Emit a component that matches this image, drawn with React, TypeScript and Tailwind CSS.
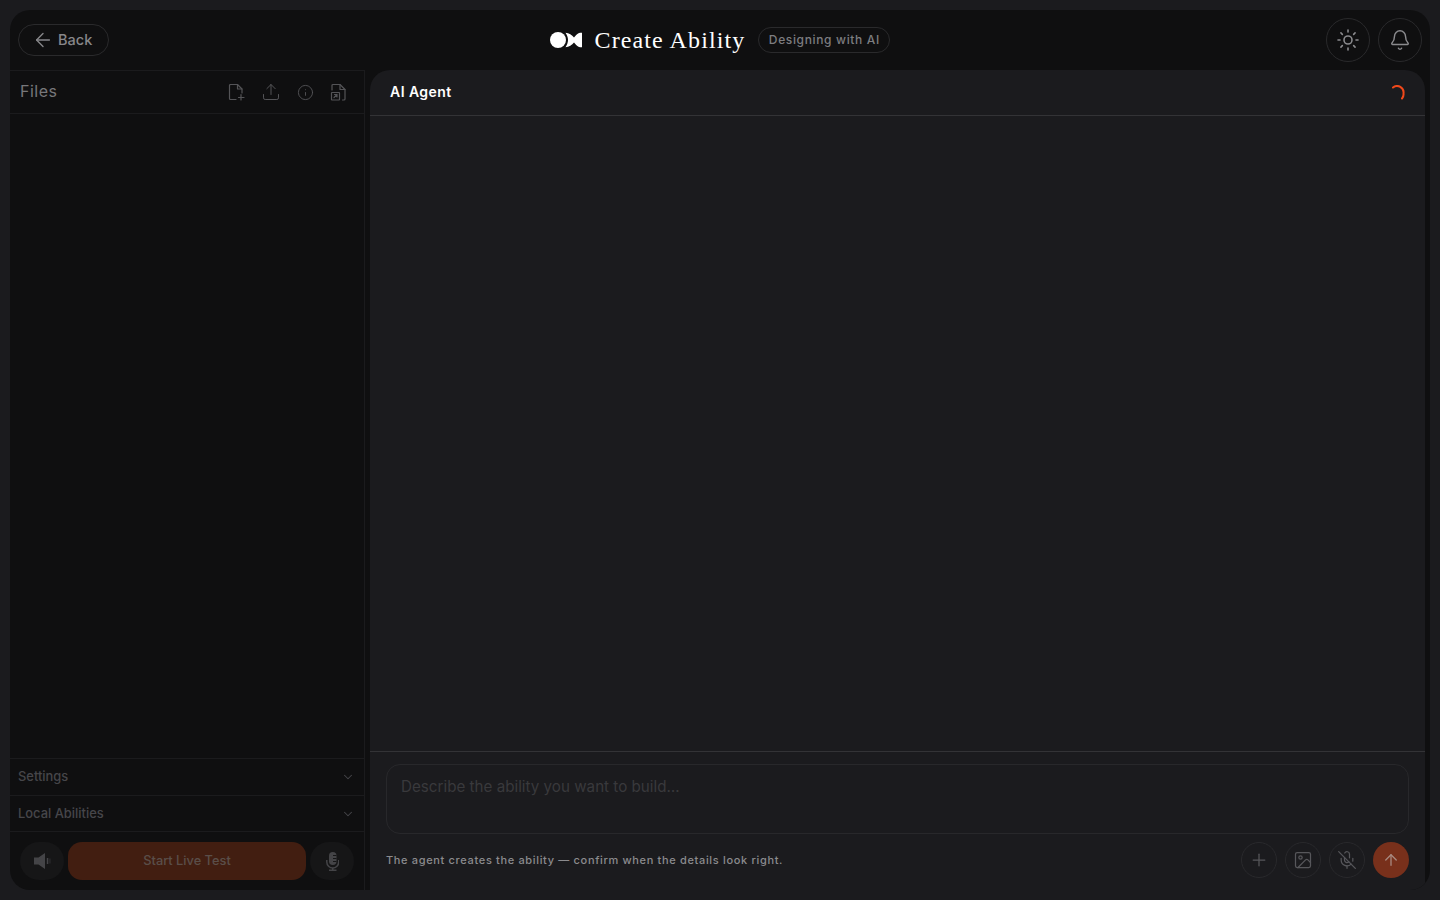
import React from "react";
import { ArrowLeft, Bell, ChevronDown, ImageIcon, Info, MicOff, Plus, Sun, Upload, ArrowUp } from "lucide-react";

const Logo = () => (
  <svg width="32" height="16" viewBox="0 0 32 16" fill="white">
    <circle cx="8" cy="8" r="8" />
    <path d="M15.500 .8C19 .8 22 3 24 5.500 26 3 28 .8 30 .8H32V15.200H30C28 15.200 26 13 24 10.500 22 13 19 15.200 15.500 15.200 17 13 18 10.500 18 8S17 3 15.500 .8z" />
  </svg>
);

const FileAdd = () => (
  <svg width="18" height="18" viewBox="0 0 18 18" fill="none" stroke="currentColor" strokeWidth="1.2" strokeLinecap="round" strokeLinejoin="round">
    <path d="M8 16.500H2.500a1 1 0 0 1-1-1v-13a1 1 0 0 1 1-1h7l4.500 4.500v4" />
    <path d="M9.500 1.500v4.500H14" />
    <path d="M13 11.500v5.500M10.500 14.500H16" />
  </svg>
);

const FileLink = () => (
  <svg width="18" height="18" viewBox="0 0 18 18" fill="none" stroke="currentColor" strokeWidth="1.2" strokeLinecap="round" strokeLinejoin="round">
    <path d="M2 7V2.500a1 1 0 0 1 1-1h7l5 5v9.500a1 1 0 0 1-1 1h-1.500" />
    <path d="M10 1.500v5h5" />
    <rect x="1.500" y="9.500" width="8" height="7.500" rx="0.5" />
    <path d="M4 14.500l3-3M4.500 11.500H7V14" />
  </svg>
);

const Speaker = () => (
  <svg width="17" height="16" viewBox="0 0 17 16" fill="currentColor">
    <path d="M0 4.500H4.500L11 0V16L4.500 11.500H0z" />
    <rect x="12.800" y="5" width="1.500" height="6" />
    <rect x="15.300" y="5.500" width="1.200" height="5" opacity="0.5" />
  </svg>
);

const MicFilled = () => (
  <svg width="13" height="19" viewBox="0 0 13 19" fill="none" stroke="currentColor">
    <rect x="3" y="0" width="7.500" height="13" rx="3.750" fill="currentColor" stroke="none" />
    <path d="M7 3.500h3.500M7 6.500h3.500M7 9.500h3.500" stroke="#161617" strokeWidth="1" />
    <path d="M.8 8v2a5.950 5.950 0 0 0 11.900 0V8" strokeWidth="1.500" />
    <path d="M6.750 16v2M3 18.300h7.500" strokeWidth="1.500" />
  </svg>
);

const SideRow = ({ label, height }: { label: string; height: string }) => (
  <div className={`flex items-center justify-between border-t border-[#1b1b1d] pl-2 pr-[9px] text-[12.9px] font-medium text-[#46464a] ${height}`}>
    <span>{label}</span>
    <ChevronDown className="h-[14px] w-[14px]" strokeWidth={1.75} />
  </div>
);

const RoundBtn = ({ children }: { children: React.ReactNode }) => (
  <button className="flex h-9 w-9 items-center justify-center rounded-full border border-[#29292c] text-[#57575b]">
    {children}
  </button>
);

const ToolIcon = ({ children }: { children: React.ReactNode }) => (
  <span className="flex w-[18px] justify-center">{children}</span>
);

export default function App() {
  return (
    <div className="h-screen w-full overflow-hidden bg-[#1b1b1e] p-[10px] font-['Inter',sans-serif]">
      <div className="flex h-full flex-col overflow-hidden rounded-[20px] bg-[#0f0f10] pr-[5px]">
        <header className="grid h-[60px] shrink-0 grid-cols-[1fr_auto_1fr] items-center pl-2 pr-[3px]">
          <div>
            <button className="flex h-8 w-[91px] items-center gap-[4px] rounded-full border border-[#2a2a2c] pl-[13px] text-[14.5px] font-medium text-[#87878a]">
              <ArrowLeft className="h-[22px] w-[22px]" strokeWidth={1.5} />
              Back
            </button>
          </div>
          <div className="flex items-center">
            <Logo />
            <h1 className="ml-[13px] font-['Liberation_Serif',serif] text-2xl leading-8 tracking-[1.1px] text-white">Create Ability</h1>
            <span className="ml-[13px] flex h-[26px] items-center rounded-full border border-[#2a2a2c] px-[9.5px] text-xs font-medium tracking-[0.65px] text-[#7d7d80]">
              Designing with AI
            </span>
          </div>
          <div className="flex justify-end gap-2">
            <button className="flex h-11 w-11 items-center justify-center rounded-full border border-[#2a2a2c] text-[#8a8a8d]">
              <Sun className="h-6 w-6" strokeWidth={1.6} />
            </button>
            <button className="flex h-11 w-11 items-center justify-center rounded-full border border-[#2a2a2c] text-[#8a8a8d]">
              <Bell className="h-[22px] w-[22px]" strokeWidth={1.6} />
            </button>
          </div>
        </header>

        <div className="flex min-h-0 flex-1 gap-[5px]">
          <aside className="flex w-[355px] shrink-0 flex-col border-r border-t border-[#1b1b1d]">
            <div className="flex h-[43px] items-center justify-between border-b border-[#1b1b1d] pl-[10px] pr-[16px]">
              <span className="mb-[2px] text-base tracking-[0.5px] text-[#77777a]">Files</span>
              <div className="flex items-center gap-4 text-[#545457]">
                <ToolIcon><FileAdd /></ToolIcon>
                <ToolIcon><Upload className="h-5 w-5 shrink-0" strokeWidth={1.2} /></ToolIcon>
                <ToolIcon><Info className="h-[17px] w-[17px] shrink-0" strokeWidth={1.3} /></ToolIcon>
                <ToolIcon><FileLink /></ToolIcon>
              </div>
            </div>
            <div className="flex-1" />
            <SideRow label="Settings" height="h-[37px]" />
            <SideRow label="Local Abilities" height="h-[36px]" />
            <div className="flex flex-1 grow-0 basis-[59px] gap-1 border-t border-[#1b1b1d] pl-[10px] pr-[10px] pt-[10px]">
              <button className="flex h-[38px] w-[44px] items-center justify-center rounded-[19px] bg-[#161617] text-[#444447]">
                <Speaker />
              </button>
              <button className="h-[38px] flex-1 rounded-[14px] bg-[#421e11] text-[12.8px] font-medium text-[#5a4e49]">
                Start Live Test
              </button>
              <button className="flex h-[38px] w-[44px] items-center justify-center rounded-[19px] bg-[#161617] text-[#444447]">
                <MicFilled />
              </button>
            </div>
          </aside>

          <main className="flex min-w-0 flex-1 flex-col rounded-t-[20px] bg-[#1b1b1e]">
            <div className="flex h-[46px] shrink-0 items-center justify-between border-b border-[#333336] pl-5 pr-[19px]">
              <span className="mb-[2px] text-sm font-semibold tracking-[0.45px] text-white">AI Agent</span>
              <svg width="16" height="16" viewBox="0 0 16 16" fill="none" stroke="#f0481a" strokeWidth="2" strokeLinecap="round">
                <path d="M3 2.500A6.500 6.500 0 0 1 13.500 8.500 6.500 6.500 0 0 1 12 13.500" />
              </svg>
            </div>
            <div className="flex-1" />
            <div className="h-[139px] shrink-0 border-t border-[#333336] px-4 pt-[12px]">
              <div className="h-[70px] rounded-[14px] border border-[#28282b] px-[14px] py-[12px] text-[15.2px] leading-5 text-[#39393c]">
                Describe the ability you want to build…
              </div>
              <div className="mt-2 flex items-center justify-between">
                <span className="text-[11px] font-medium tracking-[0.66px] text-[#8b8b8e]">
                  The agent creates the ability — confirm when the details look right.
                </span>
                <div className="flex gap-2">
                  <RoundBtn><Plus className="h-5 w-5" strokeWidth={1.5} /></RoundBtn>
                  <RoundBtn><ImageIcon className="h-5 w-5" strokeWidth={1.5} /></RoundBtn>
                  <RoundBtn><MicOff className="h-5 w-5" strokeWidth={1.5} /></RoundBtn>
                  <button className="flex h-9 w-9 items-center justify-center rounded-full bg-[#78301b] text-[#a88a80]">
                    <ArrowUp className="h-[18px] w-[18px]" strokeWidth={1.75} />
                  </button>
                </div>
              </div>
            </div>
          </main>
        </div>
      </div>
    </div>
  );
}
